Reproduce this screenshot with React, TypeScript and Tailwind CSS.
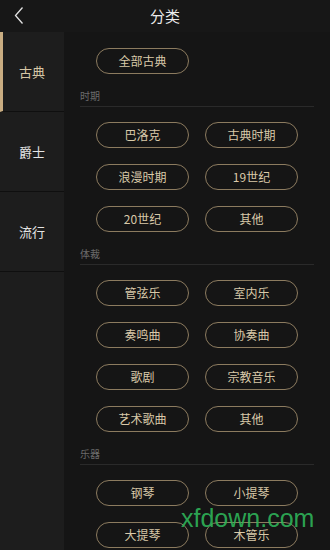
import React from "react";

type Section = {
  title?: string;
  items: string[];
};

const SECTIONS: Section[] = [
  { items: ["全部古典"] },
  { title: "时期", items: ["巴洛克", "古典时期", "浪漫时期", "19世纪", "20世纪", "其他"] },
  {
    title: "体裁",
    items: ["管弦乐", "室内乐", "奏鸣曲", "协奏曲", "歌剧", "宗教音乐", "艺术歌曲", "其他"],
  },
  { title: "乐器", items: ["钢琴", "小提琴", "大提琴", "木管乐"] },
];

const TABS = ["古典", "爵士", "流行"];

function Chip({ label }: { label: string }) {
  return (
    <button
      type="button"
      className="flex h-[26px] items-center justify-center rounded-full border border-[#8c7b5f] text-[12px] leading-none text-[#d9c9a9]"
    >
      {label}
    </button>
  );
}

export default function App() {
  return (
    <div
      className="relative flex h-[550px] w-[330px] flex-col overflow-hidden bg-[#151515]"
      style={{ fontFamily: '"Noto Sans CJK SC", "Noto Sans", sans-serif' }}
    >
      <header className="relative flex h-8 shrink-0 items-center justify-center bg-[#171717]">
        <svg
          className="absolute left-[13px] top-[6px]"
          width="12"
          height="19"
          viewBox="0 0 12 19"
          fill="none"
        >
          <path d="M9.5 1.5 L2.5 9.5 L9.5 17.5" stroke="#e2e2e2" strokeWidth="1.3" />
        </svg>
        <h1 className="text-[15px] text-[#ececec]">分类</h1>
      </header>

      <div className="flex min-h-0 flex-1">
        <aside className="w-16 shrink-0 bg-[#1d1d1d]">
          {TABS.map((tab, i) => (
            <div
              key={tab}
              className={`flex h-[80px] items-center justify-center border-b border-[#0f0f0f] text-[13px] ${
                i === 0
                  ? "border-l-[3px] border-l-[#c9ad82] pr-[3px] text-[#d6c6a6]"
                  : "text-[#e4e4e4]"
              }`}
            >
              <span className={i === 0 ? "" : ""}>{tab}</span>
            </div>
          ))}
        </aside>

        <main className="flex-1 overflow-hidden px-4 pt-4">
          {SECTIONS.map((section, idx) => (
            <section key={idx}>
              {section.title && (
                <div className="mt-4 mb-[15px] border-b border-[#2a2a2a] pb-1 text-[10px] leading-[12px] text-[#6b6b6b]">
                  {section.title}
                </div>
              )}
              <div className="grid grid-cols-2 gap-4 px-4">
                {section.items.map((item, j) => (
                  <Chip key={j} label={item} />
                ))}
              </div>
            </section>
          ))}
        </main>
      </div>

      <div
        className="pointer-events-none absolute left-[181px] top-[506px] text-[25px] leading-none text-[#2fb65a]/90"
        style={{ fontFamily: '"Liberation Sans", Arial, sans-serif' }}
      >
        xfdown.com
      </div>
    </div>
  );
}
